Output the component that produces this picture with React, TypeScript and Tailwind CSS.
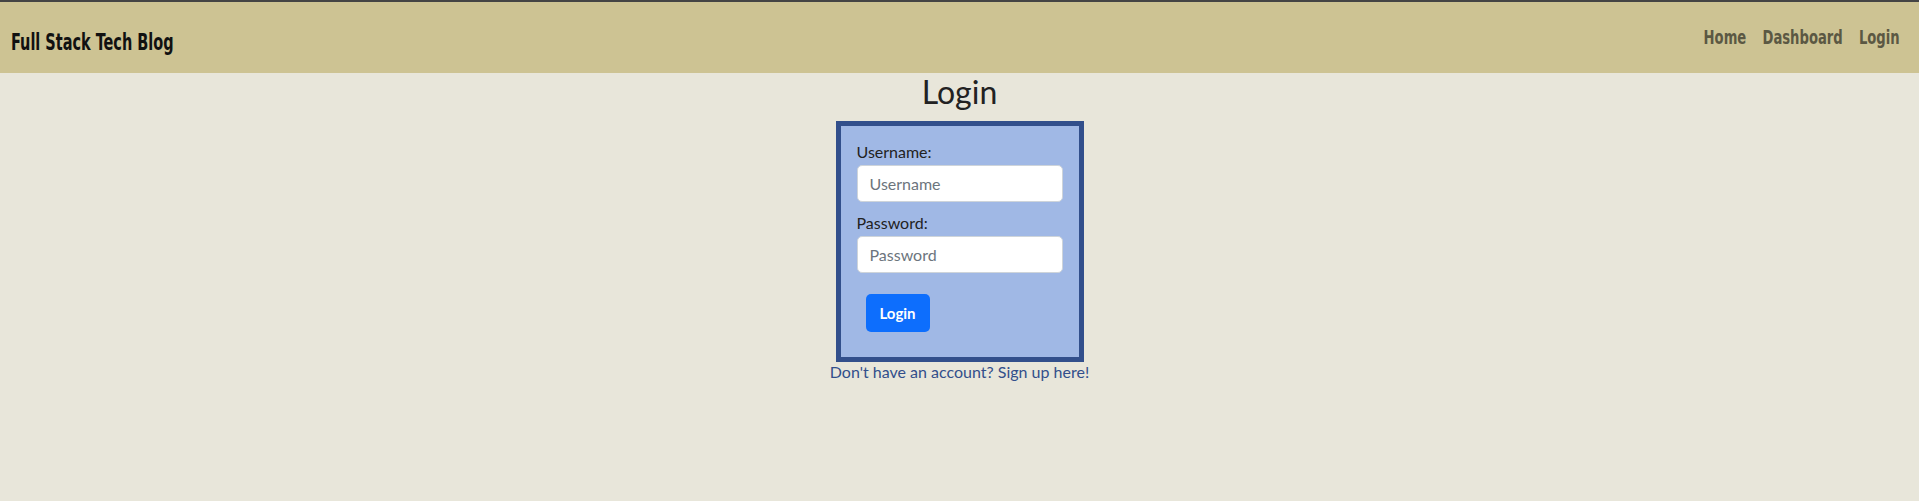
import React from "react";

const navLinks = ["Home", "Dashboard", "Login"];

const App = () => {
  return (
    <div className="min-h-[501px] bg-[#e8e6da] font-['Lato',sans-serif]">
      <header className="flex h-[73px] items-center justify-between border-t-2 border-[#444444] bg-[#cdc393] pl-[11px] pr-[19px]">
        {/* condensed heavy font stand-in for Impact */}
        <h1 className="origin-left scale-x-[0.70] whitespace-nowrap pt-[9px] font-['DejaVu_Sans_Condensed',sans-serif] text-[23px] font-bold leading-none text-[#111111]">
          Full Stack Tech Blog
        </h1>
        <nav className="flex origin-right scale-x-[0.77] items-center gap-[21px] font-['DejaVu_Sans_Condensed',sans-serif] text-[19px] font-bold leading-none text-[#5b5843]">
          {navLinks.map((link) => (
            <a key={link} href="#">
              {link}
            </a>
          ))}
        </nav>
      </header>

      <main className="flex flex-col items-center">
        <h2 className="text-[32px] leading-[1.2] text-[#222222]">Login</h2>

        <form className="mt-[10px] w-[248px] border-[5px] border-[#324f8b] bg-[#a0b8e5] px-4 pb-4 pt-[14px]">
          <label className="mb-px block text-[16px] leading-6 text-[#222222]">
            Username:
          </label>
          <input
            type="text"
            placeholder="Username"
            className="mb-[9px] block h-[37px] w-full rounded-[5px] border border-[#ced4da] bg-white px-3 text-[16px] text-[#212529] placeholder:text-[#6c757d]"
          />
          <label className="mb-px block text-[16px] leading-6 text-[#222222]">
            Password:
          </label>
          <input
            type="password"
            placeholder="Password"
            className="block h-[37px] w-full rounded-[5px] border border-[#ced4da] bg-white px-3 text-[16px] text-[#212529] placeholder:text-[#6c757d]"
          />
          <button
            type="button"
            className="mb-[9px] ml-[9px] mt-[21px] h-[38px] w-[64px] rounded-[5px] bg-[#0d6efd] text-[15px] font-bold text-white"
          >
            Login
          </button>
        </form>

        <a href="#" className="text-[16px] leading-[1.2] text-[#324f8b]">
          Don't have an account? Sign up here!
        </a>
      </main>
    </div>
  );
};

export default App;
